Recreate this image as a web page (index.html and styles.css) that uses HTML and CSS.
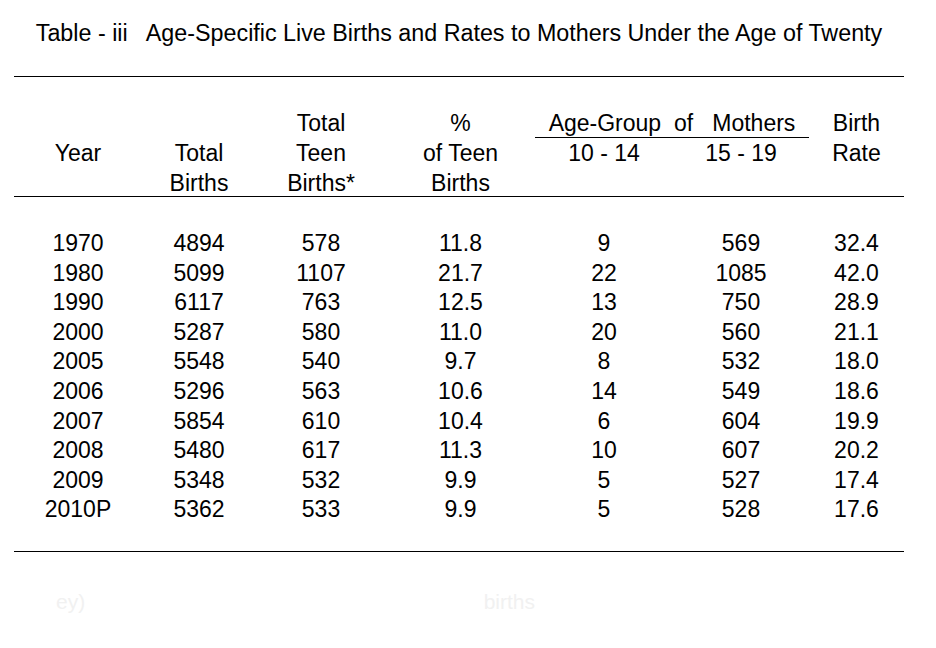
FILE: index.html
```html
<!DOCTYPE html>
<html lang="en">
<head>
<meta charset="utf-8">
<title>Table - iii</title>
<link rel="stylesheet" href="styles.css">
</head>
<body>
<div class="page">
  <h1 class="title">Table - iii   Age-Specific Live Births and Rates to Mothers Under the Age of Twenty</h1>
  <div class="table">
    <div class="head">
      <div class="c1 r2">Year</div>
      <div class="c2 r23">Total<br>Births</div>
      <div class="c3 r13">Total<br>Teen<br>Births*</div>
      <div class="c4 r13">%<br>of Teen<br>Births</div>
      <div class="c56 r1 group">Age-Group  of   Mothers</div>
      <div class="c5 r2">10 - 14</div>
      <div class="c6 r2">15 - 19</div>
      <div class="c7 r12">Birth<br>Rate</div>
    </div>
    <div class="body">
      <div class="row"><span>1970</span><span>4894</span><span>578</span><span>11.8</span><span>9</span><span>569</span><span>32.4</span></div>
      <div class="row"><span>1980</span><span>5099</span><span>1107</span><span>21.7</span><span>22</span><span>1085</span><span>42.0</span></div>
      <div class="row"><span>1990</span><span>6117</span><span>763</span><span>12.5</span><span>13</span><span>750</span><span>28.9</span></div>
      <div class="row"><span>2000</span><span>5287</span><span>580</span><span>11.0</span><span>20</span><span>560</span><span>21.1</span></div>
      <div class="row"><span>2005</span><span>5548</span><span>540</span><span>9.7</span><span>8</span><span>532</span><span>18.0</span></div>
      <div class="row"><span>2006</span><span>5296</span><span>563</span><span>10.6</span><span>14</span><span>549</span><span>18.6</span></div>
      <div class="row"><span>2007</span><span>5854</span><span>610</span><span>10.4</span><span>6</span><span>604</span><span>19.9</span></div>
      <div class="row"><span>2008</span><span>5480</span><span>617</span><span>11.3</span><span>10</span><span>607</span><span>20.2</span></div>
      <div class="row"><span>2009</span><span>5348</span><span>532</span><span>9.9</span><span>5</span><span>527</span><span>17.4</span></div>
      <div class="row"><span>2010P</span><span>5362</span><span>533</span><span>9.9</span><span>5</span><span>528</span><span>17.6</span></div>
    </div>
  </div>
  <div class="ghost"><span class="ghost-key">ey)</span><span></span><span></span><span class="ghost-note">births</span></div>
</div>
</body>
</html>
```

FILE: styles.css
```css
html, body {
  margin: 0;
  padding: 0;
  background: #fff;
}

body {
  font-family: "Liberation Sans", Arial, sans-serif;
  color: #000;
}

.page {
  width: 890px;
  margin-left: 14px;
}

.title {
  margin: 0;
  padding-top: 19px;
  font-size: 23.3px;
  font-weight: normal;
  line-height: 28px;
  text-align: center;
  white-space: pre;
  margin-bottom: 29px;
}

.table {
  font-size: 23px;
}

.head,
.row,
.ghost {
  display: grid;
  grid-template-columns: 128px 114px 130px 149px 138px 136px 95px;
}

.head {
  border-top: 1px solid #000;
  border-bottom: 1px solid #000;
  padding-top: 31px;
  grid-template-rows: 30px 30px 28px;
  line-height: 30px;
  text-align: center;
}

.c1 { grid-column: 1; }
.c2 { grid-column: 2; }
.c3 { grid-column: 3; }
.c4 { grid-column: 4; }
.c5 { grid-column: 5; }
.c6 { grid-column: 6; }
.c7 { grid-column: 7; }
.c56 { grid-column: 5 / 7; }

.r1 { grid-row: 1; }
.r2 { grid-row: 2; }
.r12 { grid-row: 1 / 3; }
.r13 { grid-row: 1 / 4; }
.r23 { grid-row: 2 / 4; }

.group {
  white-space: pre;
  border-bottom: 1px solid #000;
  box-sizing: border-box;
}

.body {
  padding-top: 32px;
  padding-bottom: 26px;
  border-bottom: 1px solid #000;
}

.row {
  line-height: 29.6px;
  text-align: center;
}

.ghost {
  margin-top: 36px;
  font-size: 21px;
  line-height: 28px;
  color: #f1f1f1;
}

.ghost-key {
  padding-left: 42px;
}

.ghost-note {
  text-align: right;
  padding-right: 0;
}
```
